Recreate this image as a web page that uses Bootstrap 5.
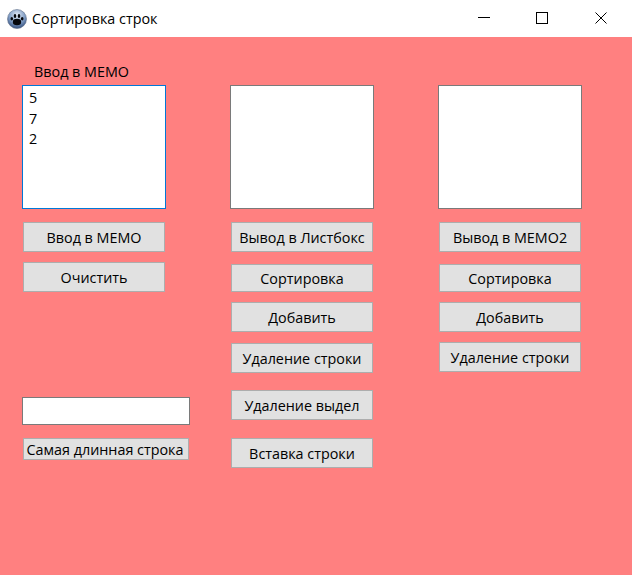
<!DOCTYPE html>
<html lang="ru">
<head>
<meta charset="utf-8">
<title>Сортировка строк</title>
<link href="https://cdn.jsdelivr.net/npm/bootstrap@5.3.0/dist/css/bootstrap.min.css" rel="stylesheet">
<style>
html,body{height:100%;margin:0;overflow:hidden}
body{font-family:"Open Sans","Noto Sans",sans-serif;font-size:14.35px;color:#000;background:#ff8080}
.titlebar{height:37px;background:#fff;padding-left:7px}
.apptitle{font-size:14.35px;margin-left:5px;line-height:37px}
.winbtns{margin-left:auto;margin-right:2px;align-self:flex-start}
.winbtn{width:58px;height:36px;padding:0;border:0;background:transparent;display:flex;align-items:center;justify-content:center}
.winbtn-close{margin-left:1px}
.formarea{padding-left:22px;height:538px;column-gap:40px}
.colone{width:168px}
.coltwo{width:144px;margin-right:24px}
.colthree{width:144px}
.capt{height:48px;padding:25px 0 0 12px;line-height:20px}
.capt-empty{height:48px}
.memo{width:144px;height:124px;background:#fff;border:1px solid #7a7a7a;padding:2px 6px;line-height:20.5px;white-space:pre-line;font-size:14.35px}
.memo-focus{border-color:#0078d7}
.formbtn{display:block;width:142px;height:30px;margin-left:1px;padding:2px 0 0;background:#e1e1e1;border:1px solid #adadad;border-radius:0;color:#000;font-size:14.35px;line-height:20px;white-space:nowrap;text-align:center}
.m13{margin-top:13px}.m10{margin-top:10px}.m11{margin-top:11px}.m12{margin-top:12px}.m17{margin-top:17px}.m18{margin-top:18px}
.h28{height:28px}
.oneline{width:168px;height:28px;background:#fff;border:1px solid #7a7a7a;margin-top:105px}
.longbtn{width:166px;height:22px;line-height:18px;margin-top:13px;padding:1px 2px 0 0}
</style>
</head>
<body>
<div class="titlebar d-flex align-items-center">
  <svg width="20" height="20" viewBox="0 0 20 20" aria-hidden="true">
    <defs><radialGradient id="orb" cx="50%" cy="30%" r="70%"><stop offset="0" stop-color="#e6edf7"/><stop offset=".6" stop-color="#7f9cc4"/><stop offset="1" stop-color="#34507e"/></radialGradient></defs>
    <circle cx="10" cy="10" r="9.5" fill="url(#orb)" stroke="#5f6f88" stroke-width=".6"/>
    <g fill="#05070c"><ellipse cx="10" cy="13" rx="4.2" ry="3.2"/><ellipse cx="4.8" cy="9.8" rx="1.3" ry="1.8"/><ellipse cx="8" cy="7" rx="1.3" ry="1.9"/><ellipse cx="12" cy="7" rx="1.3" ry="1.9"/><ellipse cx="15.2" cy="9.8" rx="1.3" ry="1.8"/></g>
  </svg>
  <span class="apptitle">Сортировка строк</span>
  <div class="winbtns d-flex">
    <button class="winbtn" aria-label="Свернуть"><svg width="12" height="12" viewBox="0 0 12 12"><path d="M0 5.5H12" stroke="#000"/></svg></button>
    <button class="winbtn" aria-label="Развернуть"><svg width="12" height="12" viewBox="0 0 12 12"><rect x=".5" y=".5" width="11" height="11" fill="none" stroke="#000"/></svg></button>
    <button class="winbtn winbtn-close" aria-label="Закрыть"><svg width="12" height="12" viewBox="0 0 12 12"><path d="M.5 .5L11.5 11.5M11.5 .5L.5 11.5" stroke="#000"/></svg></button>
  </div>
</div>
<div class="formarea d-flex align-items-start">
  <div class="colone">
    <div class="capt">Ввод в MEMO</div>
    <div class="memo memo-focus">5
7
2</div>
    <button class="formbtn m13">Ввод в MEMO</button>
    <button class="formbtn m10">Очистить</button>
    <div class="oneline"></div>
    <button class="formbtn longbtn">Самая длинная строка</button>
  </div>
  <div class="coltwo">
    <div class="capt-empty"></div>
    <div class="memo"></div>
    <button class="formbtn m13">Вывод в Листбокс</button>
    <button class="formbtn m12 h28">Сортировка</button>
    <button class="formbtn m10">Добавить</button>
    <button class="formbtn m11">Удаление строки</button>
    <button class="formbtn m17">Удаление выдел</button>
    <button class="formbtn m18">Вставка строки</button>
  </div>
  <div class="colthree">
    <div class="capt-empty"></div>
    <div class="memo"></div>
    <button class="formbtn m13">Вывод в MEMO2</button>
    <button class="formbtn m12 h28">Сортировка</button>
    <button class="formbtn m10">Добавить</button>
    <button class="formbtn m10">Удаление строки</button>
  </div>
</div>
<script src="https://cdn.jsdelivr.net/npm/bootstrap@5.3.0/dist/js/bootstrap.bundle.min.js"></script>
</body>
</html>
